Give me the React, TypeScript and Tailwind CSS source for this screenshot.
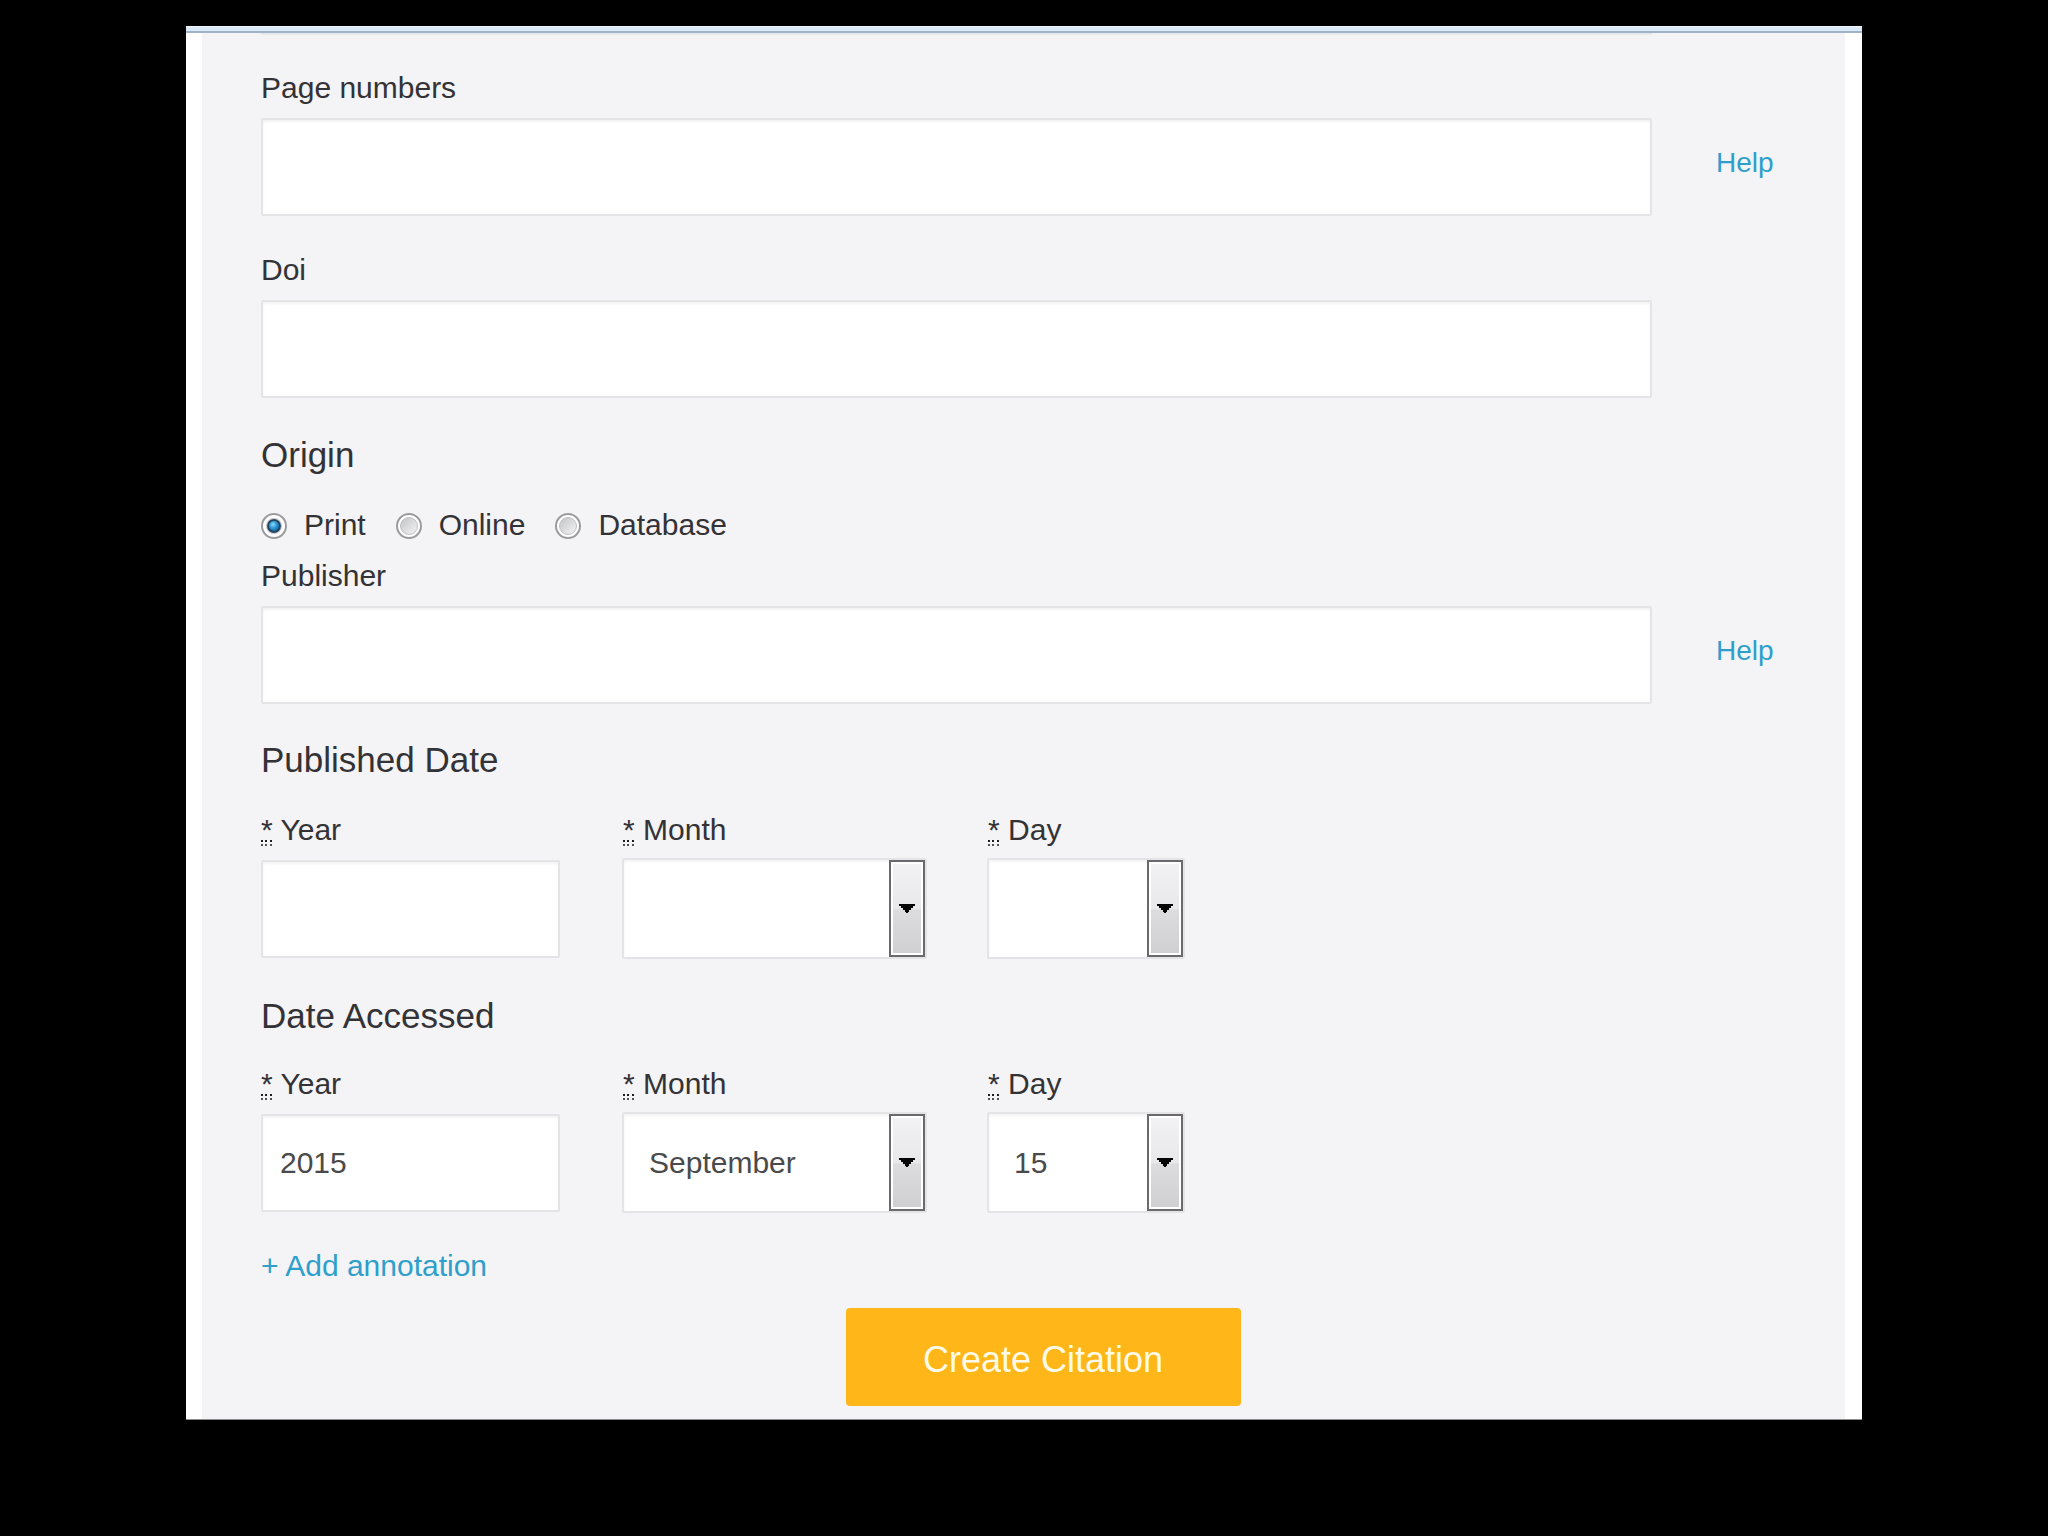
import { useState, type ReactNode } from "react";

const BOX =
  "block w-full rounded-xs border-2 border-[#e4e3e6] bg-white text-[30px] text-[#4a4a4a] shadow-[inset_0_2px_3px_rgba(0,0,0,0.05)] outline-none";

function TextBox({ id, value = "" }: { id: string; value?: string }) {
  return <input id={id} name={id} type="text" defaultValue={value} className={`${BOX} h-[98px] px-[17px]`} />;
}

function HelpLink() {
  return (
    <a href="#help" className="pb-2 text-[28px] leading-10 text-[#2e9fcb]">
      Help
    </a>
  );
}

function TextField({ id, label, help = false }: { id: string; label: string; help?: boolean }) {
  return (
    <div>
      <label htmlFor={id} className="mb-2.5 block w-fit text-[30px] leading-10">
        {label}
      </label>
      <div className="grid grid-cols-[1fr_129px] items-center gap-16">
        <TextBox id={id} />
        {help && <HelpLink />}
      </div>
    </div>
  );
}

function RequiredMark() {
  return (
    <abbr title="required" className="relative inline-block no-underline">
      *
      <svg className="absolute bottom-0.5 left-0" width="12" height="8" viewBox="0 0 12 8" aria-hidden="true">
        {[0, 4, 9].map((x) => (
          <g key={x} fill="#1c1c1c">
            <rect x={x} y="0" width="2" height="2" />
            <rect x={x} y="4" width="2" height="2" opacity="0.75" />
          </g>
        ))}
      </svg>
    </abbr>
  );
}

function RequiredLabel({ id, children }: { id: string; children: ReactNode }) {
  return (
    <label htmlFor={id} className="block w-fit text-[30px] leading-10">
      <RequiredMark /> {children}
    </label>
  );
}

function SelectBox({ id, value, options }: { id: string; value: string; options: string[] }) {
  return (
    <div className="relative">
      <select id={id} name={id} defaultValue={value} className={`${BOX} h-[101px] appearance-none pr-12 pl-[25px]`}>
        <option value=""></option>
        {options.map((o) => (
          <option key={o} value={o}>
            {o}
          </option>
        ))}
      </select>
      <span className="pointer-events-none absolute top-0.5 right-0.5 bottom-0.5 flex w-9 items-center justify-center border-2 border-[#6b696d] bg-white p-0.5">
        <span className="flex h-full w-full items-center justify-center bg-[linear-gradient(#f2f1f3_0%,#e8e7ea_50%,#dcdbde_52%,#d0cfd2_100%)]">
          <svg width="16" height="9" viewBox="0 0 16 9" aria-hidden="true">
            <path d="M0 0H16V2H14V4H12V6H10V8H9V9H7V8H6V6H4V4H2V2H0Z" fill="#050505" />
          </svg>
        </span>
      </span>
    </div>
  );
}

const MONTHS = [
  "January", "February", "March", "April", "May", "June",
  "July", "August", "September", "October", "November", "December",
];
const DAYS = Array.from({ length: 31 }, (_, i) => String(i + 1));

function DateFields({ name, year = "", month = "", day = "" }: { name: string; year?: string; month?: string; day?: string }) {
  return (
    <div className="flex items-start">
      <div className="mr-[62px] w-[299px]">
        <RequiredLabel id={`${name}-year`}>Year</RequiredLabel>
        <div className="mt-2.5">
          <TextBox id={`${name}-year`} value={year} />
        </div>
      </div>
      <div className="mr-[60px] w-[305px]">
        <div className="mb-2 pl-px">
          <RequiredLabel id={`${name}-month`}>Month</RequiredLabel>
        </div>
        <SelectBox id={`${name}-month`} value={month} options={MONTHS} />
      </div>
      <div className="w-[198px]">
        <div className="mb-2 pl-px">
          <RequiredLabel id={`${name}-day`}>Day</RequiredLabel>
        </div>
        <SelectBox id={`${name}-day`} value={day} options={DAYS} />
      </div>
    </div>
  );
}

function OriginRadios() {
  const [origin, setOrigin] = useState("Print");
  return (
    <div className="flex gap-[30px]">
      {["Print", "Online", "Database"].map((o) => (
        <label key={o} className="flex items-center gap-[17px] text-[30px] leading-10">
          <span className="relative mt-0.5 flex size-[26px]">
            <input
              type="radio"
              name="origin"
              value={o}
              checked={origin === o}
              onChange={() => setOrigin(o)}
              className="size-[26px] appearance-none rounded-full border-2 border-[#9b9b9d] bg-white"
            />
            {origin === o ? (
              <span className="pointer-events-none absolute inset-1.5 rounded-full border-2 border-[#24445f] bg-[radial-gradient(circle_at_40%_35%,#8fdcf8_0%,#2f9bd6_40%,#105a92_90%)] shadow-[0_0_0_1px_#c4c4c6]" />
            ) : (
              <span className="pointer-events-none absolute inset-1 rounded-full border border-[#c0c0c2] bg-[linear-gradient(135deg,#c4c5c8,#f3f3f4)]" />
            )}
          </span>
          {o}
        </label>
      ))}
    </div>
  );
}

function SectionTitle({ children }: { children: ReactNode }) {
  return <h2 className="text-[35px] leading-10">{children}</h2>;
}

export default function App() {
  return (
    <div className="min-h-screen bg-black px-[186px] py-[26px] font-['Liberation_Sans',Arial,sans-serif] text-[#333236]">
      <div className="border-b border-[#8b8a8d] bg-white">
        <div className="h-[7px] border-t border-b-2 border-t-[#f2f7fd] border-b-[#9fb3ca] bg-[#dce9f8]" />
        <form className="mr-[17px] ml-4 bg-[#f4f3f5] pb-[13px] pl-[59px]" onSubmit={(e) => e.preventDefault()}>
          <div className="mr-[193px] mb-[33px] h-0.5 bg-[#e6e8eb]" />
          <TextField id="pages" label="Page numbers" help />
          <div className="mt-[34px]">
            <TextField id="doi" label="Doi" />
          </div>
          <div className="mt-[37px] mb-[30px]">
            <SectionTitle>Origin</SectionTitle>
          </div>
          <OriginRadios />
          <div className="mt-[11px]">
            <TextField id="publisher" label="Publisher" help />
          </div>
          <div className="mt-9 mb-[30px]">
            <SectionTitle>Published Date</SectionTitle>
          </div>
          <DateFields name="published" />
          <div className="mt-[37px] mb-7">
            <SectionTitle>Date Accessed</SectionTitle>
          </div>
          <DateFields name="accessed" year="2015" month="September" day="15" />
          <a href="#annotation" className="mt-[33px] block w-fit text-[30px] leading-10 text-[#2e9fcb]">
            + Add annotation
          </a>
          <div className="mt-[22px] mr-5 flex justify-center">
            <button type="submit" className="h-[98px] w-[395px] rounded-sm bg-[#feb618] pt-1.5 text-[36px] text-[#fffbe8]">
              Create Citation
            </button>
          </div>
        </form>
      </div>
    </div>
  );
}
